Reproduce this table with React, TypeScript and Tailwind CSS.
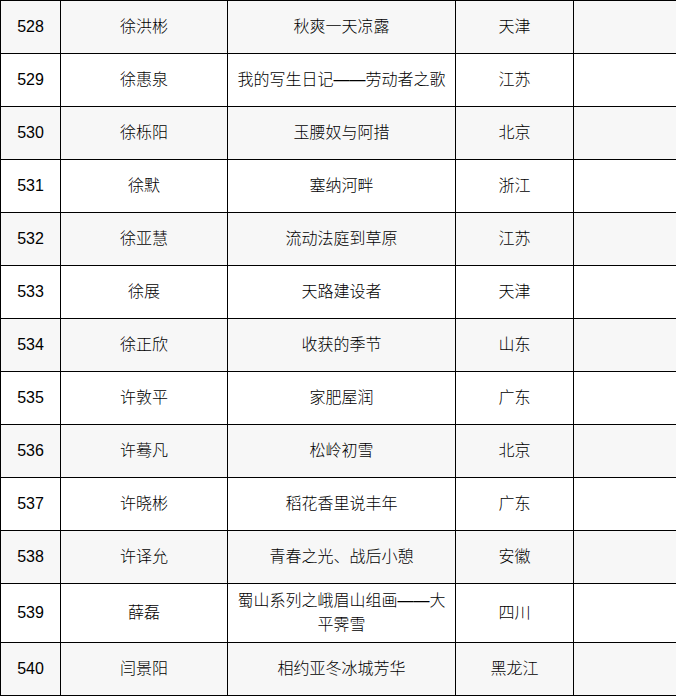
import React from "react";

const rows: [string, string, string, string][] = [
  ["528", "徐洪彬", "秋爽一天凉露", "天津"],
  ["529", "徐惠泉", "我的写生日记——劳动者之歌", "江苏"],
  ["530", "徐栎阳", "玉腰奴与阿措", "北京"],
  ["531", "徐默", "塞纳河畔", "浙江"],
  ["532", "徐亚慧", "流动法庭到草原", "江苏"],
  ["533", "徐展", "天路建设者", "天津"],
  ["534", "徐正欣", "收获的季节", "山东"],
  ["535", "许敦平", "家肥屋润", "广东"],
  ["536", "许蓦凡", "松岭初雪", "北京"],
  ["537", "许晓彬", "稻花香里说丰年", "广东"],
  ["538", "许译允", "青春之光、战后小憩", "安徽"],
  ["539", "薛磊", "蜀山系列之峨眉山组画——大平霁雪", "四川"],
  ["540", "闫景阳", "相约亚冬冰城芳华", "黑龙江"],
];

export default function App() {
  const cell = "border-r border-b border-black min-h-[53px] flex items-center justify-center px-[5px] py-[5px] text-center";
  return (
    <div
      className="w-[676px] h-[696px] overflow-hidden bg-white text-black text-[16px] leading-[24px]"
      style={{ fontFamily: '"Liberation Sans", "Noto Sans CJK SC", sans-serif' }}
    >
      <div className="grid grid-cols-[61px_167px_228px_118px_118px] w-max border-t border-black">
        {rows.map((r, i) => {
          const bg = i % 2 === 0 ? "bg-[#f7f7f7]" : "bg-white";
          return (
            <React.Fragment key={r[0]}>
              <div className={`${bg} border-l ${cell} font-normal`}>{r[0]}</div>
              <div className={`${bg} ${cell} font-light`}>{r[1]}</div>
              <div className={`${bg} ${cell} font-light`}>{r[2]}</div>
              <div className={`${bg} ${cell} font-light`}>{r[3]}</div>
              <div className={`${bg} border-r border-b border-black min-h-[53px]`} />
            </React.Fragment>
          );
        })}
      </div>
    </div>
  );
}
